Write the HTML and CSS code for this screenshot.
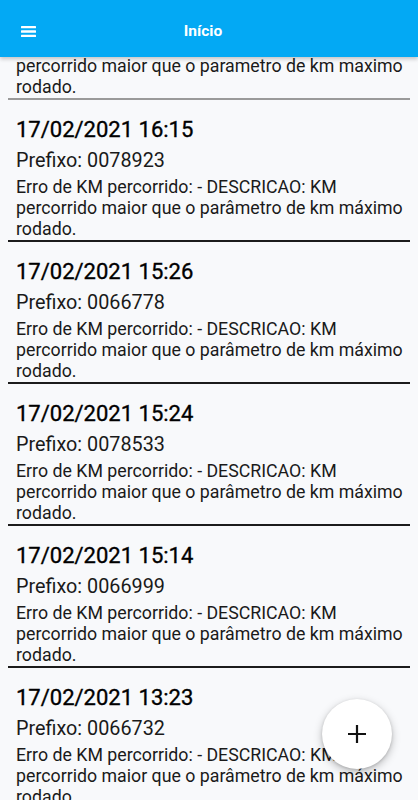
FILE: index.html
```html
<!DOCTYPE html>
<html lang="pt-BR">
<head>
<meta charset="utf-8">
<title>Início</title>
<link rel="stylesheet" href="styles.css">
</head>
<body>
<div class="app">
  <header class="appbar">
    <button class="menu-btn" aria-label="Menu">
      <svg width="15" height="11" viewBox="0 0 15 11"><rect x="0" y="0" width="15" height="2.3" rx="0.5" fill="#fff"/><rect x="0" y="4.35" width="15" height="2.3" rx="0.5" fill="#fff"/><rect x="0" y="8.7" width="15" height="2.3" rx="0.5" fill="#fff"/></svg>
    </button>
    <h1 class="title">Início</h1>
    <div class="spacer"></div>
  </header>
  <main class="content">
    <ul class="list">
      <li class="item first">
        <div class="date">17/02/2021 16:20</div>
        <div class="prefix">Prefixo: 0078923</div>
        <div class="desc">Erro de KM percorrido: - DESCRICAO: KM percorrido maior que o parametro de km maximo rodado.</div>
      </li>
      <li class="item">
        <div class="date">17/02/2021 16:15</div>
        <div class="prefix">Prefixo: 0078923</div>
        <div class="desc">Erro de KM percorrido: - DESCRICAO: KM percorrido maior que o parâmetro de km máximo rodado.</div>
      </li>
      <li class="item">
        <div class="date">17/02/2021 15:26</div>
        <div class="prefix">Prefixo: 0066778</div>
        <div class="desc">Erro de KM percorrido: - DESCRICAO: KM percorrido maior que o parâmetro de km máximo rodado.</div>
      </li>
      <li class="item">
        <div class="date">17/02/2021 15:24</div>
        <div class="prefix">Prefixo: 0078533</div>
        <div class="desc">Erro de KM percorrido: - DESCRICAO: KM percorrido maior que o parâmetro de km máximo rodado.</div>
      </li>
      <li class="item">
        <div class="date">17/02/2021 15:14</div>
        <div class="prefix">Prefixo: 0066999</div>
        <div class="desc">Erro de KM percorrido: - DESCRICAO: KM percorrido maior que o parâmetro de km máximo rodado.</div>
      </li>
      <li class="item">
        <div class="date">17/02/2021 13:23</div>
        <div class="prefix">Prefixo: 0066732</div>
        <div class="desc">Erro de KM percorrido: - DESCRICAO: KM percorrido maior que o parâmetro de km máximo rodado.</div>
      </li>
    </ul>
  </main>
  <button class="fab" aria-label="Adicionar">
    <svg width="20" height="20" viewBox="0 0 20 20"><path d="M10 1v18M1 10h18" stroke="#111" stroke-width="2.2" fill="none"/></svg>
  </button>
</div>
</body>
</html>
```
FILE: styles.css
```css
* { box-sizing: border-box; }
html, body { margin: 0; padding: 0; }
body {
  background: #f8f9fb;
  font-family: Roboto, "Noto Sans", "Liberation Sans", sans-serif;
  color: #111;
}
.app {
  width: 418px;
  height: 800px;
  overflow: hidden;
  display: flex;
  flex-direction: column;
  position: relative;
}
.appbar {
  height: 57px;
  flex: 0 0 57px;
  padding-top: 6px;
  background: #03a9f4;
  display: flex;
  align-items: center;
  position: relative;
  z-index: 2;
  box-shadow: 0 2px 4px rgba(0,0,0,0.22);
}
.menu-btn {
  width: 48px;
  height: 51px;
  border: 0;
  background: transparent;
  padding: 0 0 0 21px;
  display: flex;
  align-items: center;
}
.title {
  flex: 1;
  margin: 0;
  text-align: center;
  color: #fff;
  font-size: 15.5px;
  font-weight: 700;
  line-height: 20px;
  margin-top: -2px;
}
.spacer { width: 60px; }
.content {
  flex: 1;
  overflow: hidden;
  position: relative;
  z-index: 1;
}
.list {
  list-style: none;
  margin: -99.5px 8px 0 8px;
  padding: 0;
}
.item {
  padding: 15px 4px 0 8px;
  border-bottom: 2px solid #1c1c1c;
}
.item.first { border-bottom-color: #9a9a9a; }
.date {
  font-size: 22px;
  font-weight: 400;
  line-height: 30px;
  color: #000;
  -webkit-text-stroke: 0.35px #000;
}
.prefix {
  margin-top: 3px;
  font-size: 19.8px;
  line-height: 26px;
  color: #1a1a1a;
}
.desc {
  margin-top: 3px;
  font-size: 17.75px;
  line-height: 21px;
  color: #1a1a1a;
}
.fab {
  position: absolute;
  right: 26px;
  bottom: 31px;
  width: 70px;
  height: 70px;
  border-radius: 50%;
  border: 0;
  background: #fff;
  display: flex;
  align-items: center;
  justify-content: center;
  z-index: 3;
  box-shadow: 0 3px 8px rgba(0,0,0,0.25), 0 1px 3px rgba(0,0,0,0.15);
}
```
